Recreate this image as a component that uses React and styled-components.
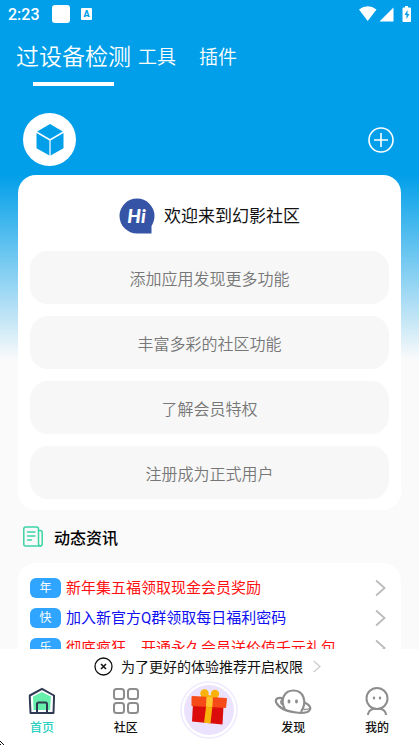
import { useState } from "react";
import styled, { createGlobalStyle } from "styled-components";

const GlobalStyle = createGlobalStyle`
    * {
        box-sizing: border-box;
    }
    body {
        margin: 0;
        font-family: Roboto, 'Noto Sans CJK SC', sans-serif;
    }
    button {
        margin: 0;
        padding: 0;
        border: none;
        background: none;
        font-family: inherit;
        color: inherit;
        cursor: pointer;
    }
    svg {
        display: block;
        flex-shrink: 0;
    }
`;

const Screen = styled.div`
    position: relative;
    display: flex;
    flex-direction: column;
    height: 100vh;
    background: linear-gradient(#019fe9 175px, #fafafa 360px);
    overflow: hidden;
`;

const StatusBar = styled.div`
    display: flex;
    align-items: center;
    flex-shrink: 0;
    height: 28px;
    padding: 0 8px;
    color: white;
`;

const Clock = styled.span`
    width: 44px;
    font-size: 16px;
    font-weight: 500;
`;

const AppSquare = styled.span`
    width: 18px;
    height: 18px;
    margin-right: 11px;
    border-radius: 3px;
    background: white;
`;

const StatusIcons = styled.div`
    display: flex;
    align-items: center;
    margin-left: auto;
`;

const Tabs = styled.nav`
    display: flex;
    flex-shrink: 0;
    height: 58px;
    padding: 6px 16px 0;
    color: white;
`;

const Tab = styled.button`
    display: flex;
    flex-direction: column;
    align-items: center;
    margin-right: ${props => props.$gap || 0}px;
    font-size: ${props => props.$active ? '23px' : '19px'};
    line-height: 48px;
    font-weight: 350;
    color: white;

    &::after {
        content: '';
        display: ${props => props.$active ? 'block' : 'none'};
        width: 81px;
        height: 4px;
        flex-shrink: 0;
        background: white;
    }
`;

const Main = styled.main`
    flex: 1;
    min-height: 0;
    overflow-y: auto;
    scrollbar-width: none;
    padding: 27px 18px 0;
`;

const ProfileRow = styled.div`
    display: flex;
    align-items: center;
    justify-content: space-between;
    padding: 0 7px 0 5px;
    margin-bottom: 9px;
`;

const Avatar = styled.div`
    display: grid;
    place-items: center;
    width: 53px;
    height: 53px;
    border-radius: 50%;
    background: white;
`;

const Card = styled.section`
    padding: ${props => props.$padding};
    border-radius: 18px;
    background: white;
`;

const Welcome = styled.div`
    display: flex;
    align-items: center;
    justify-content: center;
    gap: 9px;
    height: 36px;
    margin-bottom: 17px;
    font-size: 17px;
    line-height: 20px;
    color: #111;
`;

const FeatureList = styled.div`
    display: grid;
    gap: 12px;
`;

const Feature = styled.button`
    height: 53px;
    border-radius: 18px;
    background: #f7f7f7;
    color: #777;
    font-size: 16px;
    font-weight: 350;
`;

const SectionTitle = styled.h2`
    display: flex;
    align-items: center;
    gap: 11px;
    height: 53px;
    margin: 0;
    padding-left: 5px;
    font-size: 16px;
    font-weight: 500;
    color: #000;
`;

const NewsRow = styled.button`
    display: flex;
    align-items: center;
    width: 100%;
    height: 20px;
    margin-bottom: 10px;
    font-size: 15px;
    text-align: left;
    color: ${props => props.$color};
`;

const Tag = styled.span`
    width: 31px;
    margin-right: 5px;
    border-radius: 6px;
    background: #30a5ff;
    color: white;
    font-size: 12px;
    line-height: 20px;
    text-align: center;
`;

const NewsText = styled.span`
    flex: 1;
    white-space: nowrap;
    line-height: 20px;
`;

const Footer = styled.footer`
    flex-shrink: 0;
    background: white;
`;

const Notice = styled.div`
    display: flex;
    align-items: center;
    justify-content: center;
    height: 35px;
    padding-right: 4px;
    font-size: 14px;
    color: #111;
`;

const NoticeText = styled.button`
    display: flex;
    align-items: center;
    gap: 10px;
    margin-left: 8px;
    font-size: 14px;
    line-height: 20px;
`;

const NavBar = styled.nav`
    display: grid;
    grid-template-columns: repeat(5, 1fr);
    height: 62px;
`;

const NavItem = styled.button`
    display: flex;
    flex-direction: column;
    align-items: center;
    gap: 4px;
    padding-top: 3px;
    color: ${props => props.$active ? '#2bcfc0' : '#111'};
    font-size: 12px;
    font-weight: 500;
    line-height: 18px;
`;

const GiftItem = styled(NavItem)`
    margin-top: -6px;
`;

const Pointer = styled.svg`
    position: absolute;
    left: 0;
    bottom: 0;
`;

const features = ['添加应用发现更多功能', '丰富多彩的社区功能', '了解会员特权', '注册成为正式用户'];

const news = [
    { tag: '年', text: '新年集五福领取现金会员奖励', color: '#ff1010' },
    { tag: '快', text: '加入新官方Q群领取每日福利密码', color: '#1010f0' },
    { tag: '乐', text: '彻底疯狂，开通永久会员送价值千元礼包', color: '#ff1010' },
];

const Chevron = ({ size = 18, color = '#bbb' }) => (
    <svg width={size * 0.62} height={size} viewBox="0 0 11 18" fill="none" stroke={color} strokeWidth="1.8">
        <path d="M1 1.5 9.5 9 1 16.5" />
    </svg>
);

const CubeIcon = () => (
    <svg width="28" height="32" viewBox="0 0 28 32" fill="#019fe9">
        <path d="M14 0 26.8 7.6 14 15 1.2 7.6Z" />
        <path d="M.5 8.9 13.4 16.4V31.6L.5 24.2Z" />
        <path d="M27.5 8.9 14.6 16.4V31.6L27.5 24.2Z" />
    </svg>
);

const PlusIcon = () => (
    <svg width="26" height="26" viewBox="0 0 26 26" fill="none" stroke="white" strokeWidth="1.6">
        <circle cx="13" cy="13" r="12" />
        <path d="M13 6v14M6 13h14" />
    </svg>
);

const HiIcon = () => (
    <svg width="36" height="36" viewBox="0 0 36 36">
        <path d="M18 .5A17.5 17.5 0 0 1 35.5 18C35.5 22 34 25.5 32.5 28V35.5H18A17.5 17.5 0 0 1 18 .5Z" fill="#3654a5" />
        <text x="17.5" y="25" textAnchor="middle" fill="white" fontFamily="Lato, sans-serif" fontSize="19" fontWeight="900" fontStyle="italic">Hi</text>
    </svg>
);

const NewsIcon = () => (
    <svg width="20" height="21" viewBox="0 0 20 21" fill="none" stroke="#3dd3a5" strokeWidth="1.5" strokeLinecap="round" strokeLinejoin="round">
        <path d="M2.5 1H13.5Q15.5 1 15.5 3V17.5Q15.5 20 17.3 20H2.5Q.8 20 .8 18.3V2.7Q.8 1 2.5 1Z" />
        <path d="M15.500 4.500H17Q19.200 4.500 19.200 6.500V18Q19.200 20 17.300 20" />
        <path d="M4.500 6H12M4.500 10H12M4.500 14H8.500" />
    </svg>
);

const CloseIcon = () => (
    <svg width="19" height="19" viewBox="0 0 19 19" fill="none" stroke="#111" strokeWidth="1.3">
        <circle cx="9.5" cy="9.5" r="8.5" />
        <path d="m7 7 5 5M12 7l-5 5" strokeWidth="1.5" />
    </svg>
);

const HomeIcon = () => (
    <svg width="28" height="28" viewBox="0 0 28 28" fill="none" stroke="#2f3b52" strokeWidth="2" strokeLinejoin="round">
        <path d="M14 5 23 9.500 22 23H5.500L5 9.500Z" fill="#66efaa" stroke="none" />
        <path d="M14 1.800 26 8.500V11L25.500 26H2.500L1.800 11V8.500Z" />
        <path d="M9 26V17Q9 15.500 10.500 15.500H17.500Q19 15.500 19 17V26" />
    </svg>
);

const CommunityIcon = () => (
    <svg width="28" height="28" viewBox="0 0 28 28" fill="none" stroke="#8d8d8d" strokeWidth="2">
        <rect x="2" y="2" width="10" height="10" rx="2.500" />
        <rect x="16" y="2" width="10" height="10" rx="2.500" />
        <rect x="2" y="16" width="10" height="10" rx="2.500" />
        <rect x="16" y="16" width="10" height="10" rx="2.500" />
    </svg>
);

const PlanetIcon = () => (
    <svg width="38" height="28" viewBox="0 0 38 28" fill="none" stroke="#8d8d8d" strokeWidth="2.2" strokeLinecap="round">
        <path d="M10.500 21.500C6 13 10 3.500 19.500 3.500S33.500 14 27.500 24" />
        <path d="M7.500 11C3 10.500 1 12.500 2.200 15.500C5 21.500 14 24.500 22 25.500C31 26.500 36 25 36.300 21.500C36.300 19.500 34.500 17.500 31.500 16" />
        <path d="M8 12.500Q6 14.500 7.500 17" strokeWidth="1.5" />
        <path d="M30 22.500Q34 22.500 35.500 21.500" strokeWidth="1.500" />
        <path d="M15 14v1M22.500 14v1" strokeWidth="2.800" />
    </svg>
);

const MeIcon = () => (
    <svg width="28" height="28" viewBox="0 0 28 28" fill="none" stroke="#8d8d8d" strokeWidth="2" strokeLinecap="round">
        <circle cx="14" cy="11.500" r="10.500" />
        <path d="M5 27.500C5.500 24.500 7.500 22.500 10.500 21.800M23 27.500C22.500 24.500 20.500 22.500 17.500 21.800" />
        <path d="M11 10.500v1M17 10.500v1" strokeWidth="2.200" />
    </svg>
);

const GiftIcon = () => (
    <svg width="58" height="58" viewBox="0 0 58 58">
        <circle cx="29" cy="29" r="28" fill="white" stroke="#efeafd" strokeWidth="1.5" />
        <circle cx="29" cy="29" r="25" fill="#ebe2fd" />
        <path d="M13 22 43.500 25 42.500 43.500 12 40.500Z" fill="#da0c0c" />
        <circle cx="24.500" cy="12.500" r="4.200" fill="#f9b20b" />
        <circle cx="35" cy="13" r="4.200" fill="#f9b20b" />
        <path d="m21 15 8-1 9 2-1 3H21Z" fill="#f9b20b" />
        <path d="M13 15 46 17Q47 17 47 18L46 27 11.500 25V16Q11.500 15 13 15Z" fill="#f64b18" />
        <path d="m26.500 15.800 6.500.4-.7 10-6.300-.4Z" fill="#ffc62e" />
        <path d="m26 25.800 6.300.4-1.800 16.300-6.500-.7Z" fill="#f9b20b" />
    </svg>
);

const App = () => {
    const [tab, setTab] = useState('过设备检测');
    const [page, setPage] = useState('首页');
    const [showNotice, setShowNotice] = useState(true);

    return (
        <Screen>
            <GlobalStyle />
            <StatusBar>
                <Clock>2:23</Clock>
                <AppSquare />
                <svg width="11" height="12" viewBox="0 0 11 12">
                    <rect width="11" height="12" rx="1" fill="white" />
                    <text x="5.5" y="9" textAnchor="middle" fontSize="9" fontWeight="900" fill="#019fe9">A</text>
                </svg>
                <StatusIcons>
                    <svg width="52" height="18" viewBox="0 0 52 18" fill="white">
                        <path d="M0 4.500Q8.700-2 17.500 4.500L8.700 16Z" />
                        <path d="M34.500 2.500V16.500H20.500Z" />
                        <path d="M46 1h3v1.500h2q1 0 1 1V16q0 1-1 1h-6.500q-1 0-1-1V3.500q0-1 1-1H46Z" />
                        <path d="M48.500 5 45.500 10h2v4l3-5h-2Z" fill="#019fe9" />
                    </svg>
                </StatusIcons>
            </StatusBar>
            <Tabs>
                <Tab $active={tab === '过设备检测'} $gap={7} onClick={() => setTab('过设备检测')}>过设备检测</Tab>
                <Tab $active={tab === '工具'} $gap={23} onClick={() => setTab('工具')}>工具</Tab>
                <Tab $active={tab === '插件'} onClick={() => setTab('插件')}>插件</Tab>
            </Tabs>
            <Main>
                <ProfileRow>
                    <Avatar><CubeIcon /></Avatar>
                    <button aria-label="添加"><PlusIcon /></button>
                </ProfileRow>
                <Card $padding="23px 12px 11px">
                    <Welcome>
                        <HiIcon />
                        欢迎来到幻影社区
                    </Welcome>
                    <FeatureList>
                        {features.map(text => <Feature key={text}>{text}</Feature>)}
                    </FeatureList>
                </Card>
                <SectionTitle><NewsIcon />动态资讯</SectionTitle>
                <Card $padding="15px 15px 8px 12px">
                    {news.map(item => (
                        <NewsRow key={item.tag} $color={item.color}>
                            <Tag>{item.tag}</Tag>
                            <NewsText>{item.text}</NewsText>
                            <Chevron />
                        </NewsRow>
                    ))}
                </Card>
            </Main>
            <Footer>
                {showNotice && (
                    <Notice>
                        <button aria-label="关闭" onClick={() => setShowNotice(false)}><CloseIcon /></button>
                        <NoticeText>
                            为了更好的体验推荐开启权限
                            <Chevron size={13} color="#ccc" />
                        </NoticeText>
                    </Notice>
                )}
                <NavBar>
                    <NavItem $active={page === '首页'} onClick={() => setPage('首页')}><HomeIcon />首页</NavItem>
                    <NavItem $active={page === '社区'} onClick={() => setPage('社区')}><CommunityIcon />社区</NavItem>
                    <GiftItem aria-label="礼物"><GiftIcon /></GiftItem>
                    <NavItem $active={page === '发现'} onClick={() => setPage('发现')}><PlanetIcon />发现</NavItem>
                    <NavItem $active={page === '我的'} onClick={() => setPage('我的')}><MeIcon />我的</NavItem>
                </NavBar>
            </Footer>
            <Pointer width="5" height="5" viewBox="0 0 5 5" fill="#111">
                <path d="M0 0h1v1H0zM1 1h1v1H1zM2 2h1v1H2zM3 3h1v1H3zM0 3h1v1H0z" />
            </Pointer>
        </Screen>
    );
};

export default App
